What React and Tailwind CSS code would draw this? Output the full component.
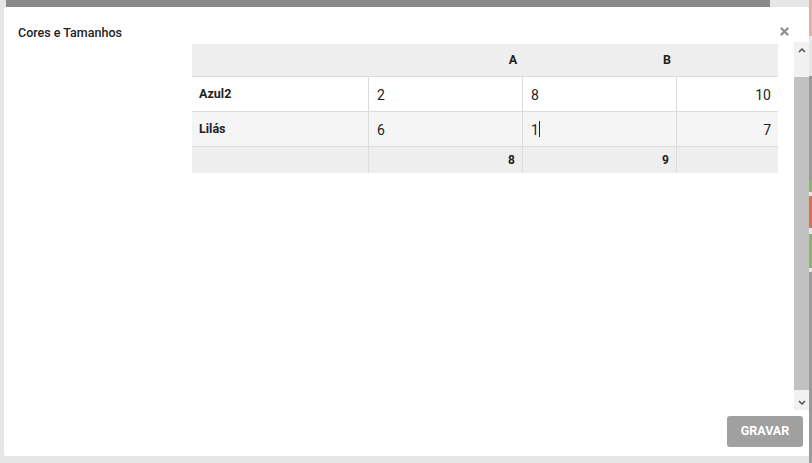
import React from 'react';

function Scrollbar() {
	return (
		<div className="w-[15px] h-full flex flex-col bg-[#f1f1f1]">
			<div className="h-[16px] flex items-center justify-center">
				<svg width="8" height="5" viewBox="0 0 8 5"><path d="M1 4 L4 1 L7 4" stroke="#505050" strokeWidth="1.5" fill="none" /></svg>
			</div>
			<div className="flex-1 flex flex-col pt-[19px] pb-[4px]">
				<div className="flex-1 bg-[#c1c1c1]"></div>
			</div>
			<div className="h-[16px] flex items-center justify-center">
				<svg width="8" height="5" viewBox="0 0 8 5"><path d="M1 1 L4 4 L7 1" stroke="#505050" strokeWidth="1.5" fill="none" /></svg>
			</div>
		</div>
	);
}

function App() {
	const rows = [
		{ name: "Azul2", a: "2", b: "8", total: "10", bg: "bg-white" },
		{ name: "Lilás", a: "6", b: "1", total: "7", bg: "bg-[#f5f5f5]", caret: true },
	];

	return (
		<div className="w-[812px] h-[463px] relative overflow-hidden bg-[#e6e6e6]" style={{ fontFamily: 'Roboto, "Liberation Sans", sans-serif' }}>
			{/* page behind the modal */}
			<div className="absolute left-[6px] top-0 w-[764px] h-[7px] bg-[#8a8a8a]"></div>
			<div className="absolute right-0 top-0 w-[3px] h-[36px] bg-[#e3b1a4]"></div>
			<div className="absolute right-0 top-[76px] w-[3px] h-[104px] bg-[#9a9a9a]"></div>
			<div className="absolute right-0 top-[180px] w-[3px] h-[12px] bg-[#8bb66a]"></div>
			<div className="absolute right-0 top-[196px] w-[3px] h-[32px] bg-[#d9704f]"></div>
			<div className="absolute right-0 top-[234px] w-[3px] h-[34px] bg-[#8bb66a]"></div>
			<div className="absolute right-0 top-[272px] w-[3px] h-[191px] bg-[#9a9a9a]"></div>

			{/* modal */}
			<div className="absolute left-[4px] top-[7px] w-[805px] h-[449px] bg-white rounded-[2px] flex flex-col">
				<div className="h-[35px] flex items-start justify-between pl-[14px] pr-[20px] pt-[18px]">
					<span className="text-[12.5px] leading-[15px] font-medium text-[#222]">Cores e Tamanhos</span>
					<svg width="9" height="9" viewBox="0 0 9 9" className="mt-[2px]">
						<path d="M1.5 1.5 L7.5 7.5 M7.5 1.5 L1.5 7.5" stroke="#8f8f8f" strokeWidth="2.4" strokeLinecap="round" />
					</svg>
				</div>
				<div className="h-[368px] flex">
					<div className="flex-1 pl-[188px] pt-[2px]">
						<div className="w-[586px] text-[#222]">
							<div className="grid grid-cols-[244px_154px_154px_34px] h-[33px] bg-[#eeeeee] border-b border-[#dcdcdc] items-center text-[12.5px] font-bold">
								<div></div>
								<div className="text-center">A</div>
								<div className="text-center">B</div>
								<div></div>
							</div>
							{rows.map((r) => (
								<div key={r.name} className={`grid grid-cols-[177px_154px_154px_101px] h-[35px] border-b border-[#dcdcdc] ${r.bg}`}>
									<div className="pl-[7px] pt-[8px] text-[12.5px] font-bold border-r border-[#dcdcdc]">{r.name}</div>
									<div className="pl-[8px] pt-[8px] text-[14px] border-r border-[#dcdcdc]">{r.a}</div>
									<div className="pl-[8px] pt-[8px] text-[14px] border-r border-[#dcdcdc] flex items-start">
										{r.b}{r.caret && <span className="inline-block w-px h-[16px] bg-[#222] mt-[1px]"></span>}
									</div>
									<div className="pr-[7px] pt-[8px] text-[14px] text-right">{r.total}</div>
								</div>
							))}
							<div className="grid grid-cols-[177px_154px_154px_101px] h-[26px] bg-[#eeeeee] text-[12px] font-bold items-center">
								<div className="h-full border-r border-[#dcdcdc]"></div>
								<div className="h-full border-r border-[#dcdcdc] text-right pr-[7px] flex items-center justify-end">8</div>
								<div className="h-full border-r border-[#dcdcdc] text-right pr-[7px] flex items-center justify-end">9</div>
								<div></div>
							</div>
						</div>
					</div>
					<div className="ml-auto pr-0">
						<Scrollbar />
					</div>
				</div>
				<div className="flex-1 flex items-start justify-end pr-[6px] pt-[6px]">
					<button className="w-[76px] h-[31px] bg-[#a0a0a0] rounded-[3px] text-white text-[12.5px] font-bold">GRAVAR</button>
				</div>
			</div>
		</div>
	);
}

export default App;
